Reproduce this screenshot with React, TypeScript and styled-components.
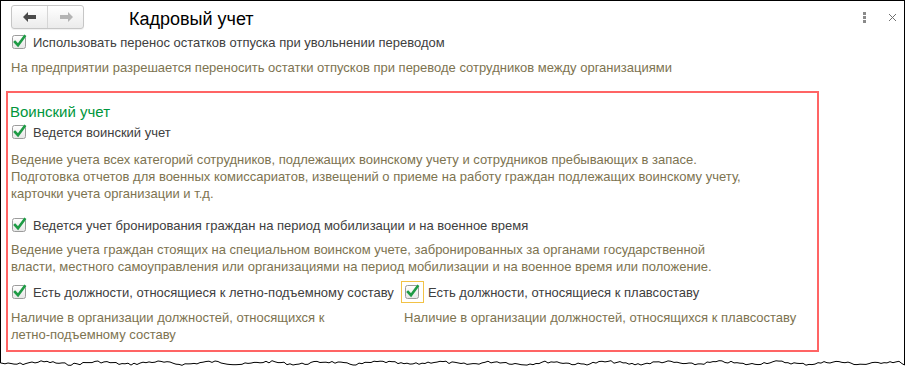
import styled, { createGlobalStyle } from 'styled-components'

const GlobalStyle = createGlobalStyle`
	html, body {
		margin: 0;
		padding: 0;
		background: #fff;
	}
	body {
		font-family: 'Liberation Sans', Arial, sans-serif;
		font-size: 13px;
		color: #404040;
	}
`

// торн. нижний край скриншота
const tornPoints = (() => {
	const pts: string[] = ['0.5,0', '0.5,3']
	let seed = 7
	const rnd = () => {
		seed = (seed * 9301 + 49297) % 233280
		return seed / 233280
	}
	for (let x = 2; x < 904; x += 3) {
		const y = 3 + Math.sin(x / 9) * 1.2 + (rnd() - 0.5) * 2.4
		pts.push(`${x},${y.toFixed(1)}`)
	}
	pts.push('904.5,5', '904.5,0')
	return pts.join(' ')
})()

const Checkbox = () => (
	<CheckIcon width='16' height='16' viewBox='0 0 16 16'>
		<defs>
			<linearGradient id='cbg' x1='0' y1='0' x2='0' y2='1'>
				<stop offset='0' stopColor='#ffffff' />
				<stop offset='1' stopColor='#e6e6e6' />
			</linearGradient>
		</defs>
		<rect x='0.5' y='1.5' width='13' height='13' rx='2' fill='url(#cbg)' stroke='#9c9c9c' />
		<path
			d='M3 8 L6 11.2 L12.6 2.2'
			fill='none'
			stroke='#1e9b45'
			strokeWidth='2.6'
			strokeLinecap='square'
		/>
	</CheckIcon>
)

const App = () => {
	return (
		<>
			<GlobalStyle />
			<Window>
				<Header>
					<NavGroup>
						<NavButton>
							<svg width='14' height='10' viewBox='0 0 14 10'>
								<path d='M0 5 L5 0 V3 H13 V7 H5 V10 Z' fill='#4a4a4a' />
							</svg>
						</NavButton>
						<NavButton divider>
							<svg width='14' height='10' viewBox='0 0 14 10'>
								<path d='M14 5 L9 0 V3 H1 V7 H9 V10 Z' fill='#b4b4b4' />
							</svg>
						</NavButton>
					</NavGroup>
					<Title>Кадровый учет</Title>
					<HeaderTools>
						<Dots>
							<span />
							<span />
							<span />
						</Dots>
						<svg width='9' height='9' viewBox='0 0 9 9'>
							<path d='M1 1 L8 8 M8 1 L1 8' stroke='#707070' strokeWidth='1' />
						</svg>
					</HeaderTools>
				</Header>

				<Content>
					<CheckRow pad={6}>
						<Checkbox />
						<Label>Использовать перенос остатков отпуска при увольнении переводом</Label>
					</CheckRow>
					<Hint pad={5} top={9}>
						На предприятии разрешается переносить остатки отпусков при переводе сотрудников между организациями
					</Hint>

					<Group>
						<GroupTitle>Воинский учет</GroupTitle>
						<CheckRow pad={4} top={3}>
							<Checkbox />
							<Label>Ведется воинский учет</Label>
						</CheckRow>
						<Hint pad={3} top={11}>
							Ведение учета всех категорий сотрудников, подлежащих воинскому учету и сотрудников пребывающих в запасе.
							<br />
							Подготовка отчетов для военных комиссариатов, извещений о приеме на работу граждан подлежащих воинскому учету,
							<br />
							карточки учета организации и т.д.
						</Hint>

						<CheckRow pad={4} top={15}>
							<Checkbox />
							<Label>Ведется учет бронирования граждан на период мобилизации и на военное время</Label>
						</CheckRow>
						<Hint pad={3} top={8}>
							Ведение учета граждан стоящих на специальном воинском учете, забронированных за органами государственной
							<br />
							власти, местного самоуправления или организациями на период мобилизации и на военное время или положение.
						</Hint>

						<Columns>
							<Column>
								<CheckRow pad={4}>
									<Checkbox />
									<Label>Есть должности, относящиеся к летно-подъемному составу</Label>
								</CheckRow>
								<Hint pad={3} top={9}>
									Наличие в организации должностей, относящихся к
									<br />
									летно-подъемному составу
								</Hint>
							</Column>
							<Column>
								<CheckRow pad={0}>
									<Focus>
										<Checkbox />
									</Focus>
									<Label>Есть должности, относящиеся к плавсоставу</Label>
								</CheckRow>
								<Hint pad={3} top={9}>
									Наличие в организации должностей, относящихся к плавсоставу
								</Hint>
							</Column>
						</Columns>
					</Group>
				</Content>
			</Window>
			<TornEdge width='906' height='8' viewBox='0 0 906 8'>
				<polyline points={tornPoints} fill='none' stroke='#000' strokeWidth='1' />
			</TornEdge>
		</>
	)
}

export default App

const Window = styled.div`
	width: 903px;
	height: 360px;
	border: 1px solid #000;
	border-bottom: none;
	background: #fff;
	box-sizing: content-box;
`

const TornEdge = styled.svg`
	display: block;
	margin-top: -1px;
`

const Header = styled.div`
	display: flex;
	align-items: center;
	height: 33px;
	padding-left: 10px;
`

const NavGroup = styled.div`
	display: flex;
	height: 22px;
	margin-top: -2px;
	border: 1px solid #c6c6c6;
	border-radius: 3px;
	background: linear-gradient(#ffffff, #ebebeb);
	box-shadow: 0 1px 1px rgba(0, 0, 0, 0.06);
`

const NavButton = styled.div<{ divider?: boolean }>`
	width: 35px;
	display: flex;
	align-items: center;
	justify-content: center;
	border-left: ${p => (p.divider ? '1px solid #d6d6d6' : 'none')};
`

const Title = styled.h1`
	margin: 0 0 0 45px;
	font-size: 18px;
	font-weight: 400;
	color: #000;
	line-height: 22px;
	padding-top: 2px;
`

const HeaderTools = styled.div`
	margin-left: auto;
	display: flex;
	align-items: center;
	gap: 22px;
	padding-right: 7px;
	margin-top: -1px;
`

const Dots = styled.div`
	display: flex;
	flex-direction: column;
	gap: 1px;

	span {
		width: 3px;
		height: 3px;
		background: #8a8a8a;
	}
`

const Content = styled.div`
	padding-left: 5px;
`

const CheckRow = styled.div<{ pad: number; top?: number }>`
	display: flex;
	align-items: center;
	height: 16px;
	padding-left: ${p => p.pad}px;
	margin-top: ${p => p.top ?? 0}px;
`

const CheckIcon = styled.svg`
	flex: none;
	overflow: visible;
`

const Label = styled.span`
	margin-left: 5px;
	color: #404040;
	white-space: nowrap;
`

const Hint = styled.div<{ pad: number; top?: number }>`
	padding-left: ${p => p.pad}px;
	margin-top: ${p => p.top ?? 0}px;
	color: #7d7350;
	line-height: 17px;
	white-space: nowrap;
`

const Group = styled.section`
	width: 809px;
	margin-top: 15px;
	border: 2px solid #ff6464;
	padding-top: 10px;
	padding-bottom: 7px;
`

const GroupTitle = styled.h2`
	margin: 0;
	padding-left: 2px;
	font-size: 15px;
	font-weight: 400;
	line-height: 18px;
	color: #00963c;
`

const Columns = styled.div`
	display: grid;
	grid-template-columns: 393px 1fr;
	margin-top: 9px;
`

const Column = styled.div`
	display: flex;
	flex-direction: column;
`

const Focus = styled.div`
	display: flex;
	padding: 2px 2px 2px 3px;
	margin-right: -1px;
	border: 1px solid #f2c246;
`
